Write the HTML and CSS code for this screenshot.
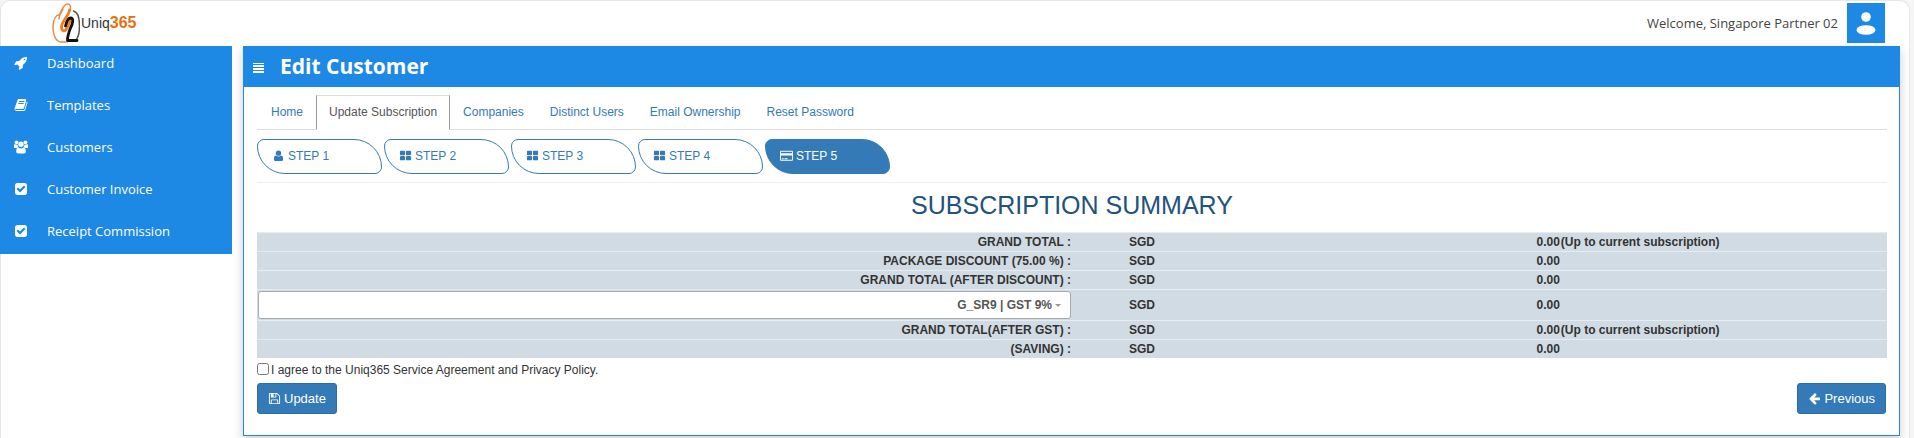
FILE: index.html
```html
<!DOCTYPE html>
<html lang="en">
<head>
<meta charset="utf-8">
<title>Edit Customer</title>
<link rel="stylesheet" href="styles.css">
</head>
<body>
<svg class="sprite" aria-hidden="true">
  <symbol id="check-square" viewBox="0 0 1792 1792"><path d="M813 1299l614-614q19-19 19-45t-19-45l-102-102q-19-19-45-19t-45 19l-467 467-211-211q-19-19-45-19t-45 19l-102 102q-19 19-19 45t19 45l358 358q19 19 45 19t45-19zm851-883v960q0 119-84.500 203.500t-203.500 84.500h-960q-119 0-203.500-84.500t-84.500-203.500v-960q0-119 84.500-203.500t203.500-84.500h960q119 0 203.500 84.500t84.500 203.500z"/></symbol>
  <symbol id="th-large" viewBox="0 0 14 14"><rect x="1" y="2" width="5.500" height="4.700" rx="1"/><rect x="7.500" y="2" width="5.500" height="4.700" rx="1"/><rect x="1" y="7.500" width="5.500" height="4.700" rx="1"/><rect x="7.500" y="7.500" width="5.500" height="4.700" rx="1"/></symbol>
</svg>
<div class="page">
  <header class="topbar">
    <a class="logo" href="#" aria-label="Uniq365">
      <svg class="logo-mark" viewBox="0 0 28 40" fill="none" stroke-linecap="round" stroke-linejoin="round">
        <path d="M15 39H9C4 38.500 .8 32 1 24 1.300 17 3.500 12 7.500 11.500M7 16C7 10 11.500 2 15 1c3.500-.6 4 3 3 6M7.500 13l3.500-7" stroke="#f08a48" stroke-width="1.500"/>
        <path d="M21.500 8c4 1 6 7 6 15 0 7-2 13-4.500 15" stroke="#555" stroke-width="1.500"/>
        <path d="M17.500 7C17 13 9.500 18 9.500 24c0 5 4 5 5.500 1l4-9" stroke="#f57c1c" stroke-width="2.800"/>
        <path d="M13.500 23c1-4 3-8 5-8 3.500 0 2.500 5 0 10-2 5-3 8-3 12.500h9.500" stroke="#111" stroke-width="2.800"/>
      </svg>
      <span class="logo-text">Uniq<b>365</b></span>
    </a>
    <div class="account">
      <span>Welcome, Singapore Partner 02</span>
      <button class="avatar" type="button" aria-label="Account"><svg viewBox="0 0 38 40"><circle cx="19" cy="14" r="4.800"/><ellipse cx="19" cy="27" rx="9.500" ry="4.800"/></svg></button>
    </div>
  </header>
  <div class="layout">
    <nav class="sidebar">
      <a href="#"><svg viewBox="0 0 1792 1792"><path d="M1440 448q0-40-28-68t-68-28-68 28-28 68 28 68 68 28 68-28 28-68zm224-288q0 249-75.500 430.500t-253.500 360.500q-81 80-195 176l-20 379q-2 16-16 26l-384 224q-7 4-16 4-12 0-23-9l-64-64q-13-14-8-32l85-276-281-281-276 85q-3 1-9 1-14 0-23-9l-64-64q-17-19-5-39l224-384q10-14 26-16l379-20q96-114 176-195 188-187 358-258t431-71q14 0 24 9.500t10 22.500z"/></svg>Dashboard</a>
      <a href="#"><svg viewBox="0 0 1792 1792"><path d="M1703 478q40 57 18 129l-275 906q-19 64-76.500 107.500t-122.500 43.500h-923q-77 0-148.500-53.500t-99.500-131.500q-24-67-2-127 0-4 3-27t4-37q1-8-3-21.500t-3-19.500q2-11 8-21t16.500-23.500 16.500-23.500q23-38 45-91.500t30-91.500q3-10 .5-30t-.5-28q3-11 17-28t17-23q21-36 42-92t25-90q1-9-2.500-32t.5-28q4-13 22-30.500t22-22.500q19-26 42.500-84.500t27.500-96.500q1-8-3-25.500t-2-26.500q2-8 9-18t18-23 17-21q8-12 16.500-30.500t15-35 16-36 19.500-32 26.500-23.500 36-11.500 47.500 5.500l-1 3q38-9 51-9h761q74 0 114 56t18 130l-274 906q-36 119-71.500 153.500t-128.500 34.500h-869q-27 0-38 15-11 16-1 43 24 70 144 70h923q29 0 56-15.500t35-41.500l300-987q7-22 5-57 38 15 59 43zm-1064 2q-4 13 2 22.500t20 9.500h608q13 0 25.500-9.500t16.500-22.500l21-64q4-13-2-22.500t-20-9.500h-608q-13 0-25.500 9.500t-16.500 22.500zm-83 256q-4 13 2 22.500t20 9.500h608q13 0 25.500-9.500t16.500-22.500l21-64q4-13-2-22.500t-20-9.500h-608q-13 0-25.500 9.500t-16.500 22.500z"/></svg>Templates</a>
      <a href="#"><svg viewBox="0 0 14 14"><circle cx="2.500" cy="2.300" r="1.900"/><circle cx="11.500" cy="2.300" r="1.900"/><circle cx="7" cy="4.300" r="2.700"/><path d="M0 7.400V6c0-1 .3-1.900 1-1.900.7.500 1.700.7 2.500.4 0 1.200.3 2 .9 2.700-.8 0-1.400.3-1.900.9H1C.4 8.100 0 7.900 0 7.400zM14 7.400V6c0-1-.3-1.900-1-1.900-.7.500-1.700.7-2.500.4 0 1.200-.3 2-.9 2.700.8 0 1.400.3 1.900.9H13c.6 0 1-.2 1-.7zM2.200 11.500c0-2 .5-3.900 2.200-3.900 1.500 1.200 3.700 1.200 5.200 0 1.700 0 2.200 1.900 2.200 3.900 0 1.200-.8 2-1.900 2H4.100c-1.100 0-1.900-.8-1.900-2z"/></svg>Customers</a>
      <a href="#"><svg><use href="#check-square"/></svg>Customer Invoice</a>
      <a href="#"><svg><use href="#check-square"/></svg>Receipt Commission</a>
    </nav>
    <main class="panel">
      <div class="panel-head">
        <button class="menu" type="button" aria-label="Toggle menu"><svg viewBox="0 0 11 11"><path d="M0 1h11v1H0zM0 3h11v2H0zM0 6h11v2H0zM0 9h11v2H0z"/></svg></button>
        <h1>Edit Customer</h1>
      </div>
      <div class="panel-body">
        <nav class="tabs">
          <a href="#">Home</a>
          <a class="active" href="#">Update Subscription</a>
          <a href="#">Companies</a>
          <a href="#">Distinct Users</a>
          <a href="#">Email Ownership</a>
          <a href="#">Reset Password</a>
        </nav>
        <div class="steps">
          <a href="#"><svg viewBox="0 0 14 14"><circle cx="7" cy="4.500" r="2.900"/><path d="M2 11c0-2.200.6-4 2.500-4C6 8.400 8 8.400 9.500 7c1.900 0 2.500 1.800 2.500 4 0 1.200-.8 2-1.800 2H3.800C2.800 13 2 12.200 2 11z"/></svg>STEP 1</a>
          <a href="#"><svg><use href="#th-large"/></svg>STEP 2</a>
          <a href="#"><svg><use href="#th-large"/></svg>STEP 3</a>
          <a href="#"><svg><use href="#th-large"/></svg>STEP 4</a>
          <a class="active" href="#"><svg viewBox="0 0 14 14"><path fill-rule="evenodd" d="M1.300 2h11.400c.7 0 1.300.5 1.300 1.200v8.300c0 .7-.6 1.200-1.300 1.200H1.300C.6 12.700 0 12.200 0 11.500V3.200C0 2.500.6 2 1.300 2zM1 3v1.700h12V3zM1 7v4.700h12V7zM2 10h2v1H2zM5 10h3v1H5z"/></svg>STEP 5</a>
        </div>
        <h2>SUBSCRIPTION SUMMARY</h2>
        <table class="summary">
          <tbody>
            <tr><th scope="row">GRAND TOTAL :</th><td>SGD</td><td>0.00<span class="note">(Up to current subscription)</span></td></tr>
            <tr><th scope="row">PACKAGE DISCOUNT (75.00 %) :</th><td>SGD</td><td>0.00</td></tr>
            <tr><th scope="row">GRAND TOTAL (AFTER DISCOUNT) :</th><td>SGD</td><td>0.00</td></tr>
            <tr><th class="tax" scope="row"><div class="select"><select aria-label="Tax rate"><option>G_SR9 | GST 9%</option></select><svg viewBox="0 0 6 3"><path d="M0 0h6L3 3z"/></svg></div></th><td>SGD</td><td>0.00</td></tr>
            <tr><th scope="row">GRAND TOTAL(AFTER GST) :</th><td>SGD</td><td>0.00<span class="note">(Up to current subscription)</span></td></tr>
            <tr><th scope="row">(SAVING) :</th><td>SGD</td><td>0.00</td></tr>
          </tbody>
        </table>
        <label class="agree"><input type="checkbox">I agree to the Uniq365 Service Agreement and Privacy Policy.</label>
        <div class="actions">
          <button class="btn" type="button"><svg viewBox="0 0 1792 1792"><path d="M512 1536h768v-384h-768v384zm896 0h128v-896q0-14-10-38.500t-20-34.500l-281-281q-10-10-34-20t-39-10v416q0 40-28 68t-68 28h-576q-40 0-68-28t-28-68v-416h-128v1280h128v-416q0-40 28-68t68-28h832q40 0 68 28t28 68v416zm-384-928v-320q0-13-9.500-22.500t-22.500-9.500h-192q-13 0-22.500 9.500t-9.500 22.500v320q0 13 9.500 22.500t22.500 9.500h192q13 0 22.500-9.500t9.500-22.500zm640 32v928q0 40-28 68t-68 28h-1344q-40 0-68-28t-28-68v-1344q0-40 28-68t68-28h928q40 0 88 20t76 48l280 280q28 28 48 76t20 88z"/></svg>Update</button>
          <button class="btn" type="button"><svg viewBox="0 0 1792 1792"><path d="M1664 896v128q0 53-32.500 90.500t-84.500 37.500h-704l293 294q38 36 38 90t-38 90l-75 76q-37 37-90 37-52 0-91-37l-651-652q-37-37-37-90 0-52 37-91l651-650q38-38 91-38 52 0 90 38l75 74q38 38 38 91t-38 91l-293 293h704q52 0 84.500 37.500t32.500 90.500z"/></svg>Previous</button>
        </div>
      </div>
    </main>
  </div>
</div>
</body>
</html>
```
FILE: styles.css
```css
* { box-sizing: border-box; }
body {
  margin: 0;
  background: #f5f5f5;
  color: #333;
  font: 12px/16px "Liberation Sans", Arial, sans-serif;
}
a { text-decoration: none; }
svg { display: block; flex: none; fill: currentColor; }
.sprite { position: absolute; width: 0; height: 0; }
.page {
  min-height: 100vh;
  margin-right: 4px;
  border: 1px solid #e6e6e6;
  border-bottom: 0;
  border-radius: 10px 10px 0 0;
  background: #fff;
}
.topbar {
  display: flex;
  justify-content: space-between;
  align-items: center;
  height: 45px;
  padding: 0 24px 2px 51px;
}
.logo { display: flex; align-items: center; gap: 1px; color: #333; }
.logo-mark { width: 28px; height: 40px; fill: none; }
.logo-text { font: 14px/24px "Liberation Sans", sans-serif; }
.logo-text b { color: #e8700c; font-size: 16px; }
.account {
  display: flex;
  align-items: center;
  gap: 9px;
  color: #444;
  font: 13px/20px "Open Sans", sans-serif;
}
.avatar { width: 38px; height: 40px; padding: 0; border: 0; background: #1e88e5; color: #fff; }
.layout { display: flex; align-items: flex-start; gap: 11px; margin-left: -1px; padding-right: 9px; }
.sidebar {
  display: flex;
  flex-direction: column;
  gap: 8px;
  width: 232px;
  padding-bottom: 6px;
  background: #1e88e5;
  font: 13px/34px "Open Sans", sans-serif;
}
.sidebar a { display: flex; align-items: center; gap: 19px; padding-left: 14px; color: #fff; }
.sidebar svg { width: 14px; height: 14px; }
.panel {
  flex: 1;
  min-width: 0;
  border: 1px solid #1e88e5;
  background: #fff;
  box-shadow: 0 4px 10px rgba(0, 0, 0, .2);
}
.panel-head {
  display: flex;
  align-items: center;
  gap: 16px;
  height: 40px;
  padding-left: 9px;
  background: #1e88e5;
  color: #fff;
}
.menu { padding: 0; border: 0; background: none; color: inherit; }
.menu svg { width: 11px; height: 11px; }
h1 { margin: 0 0 2px; font: bold 21px/38px "Open Sans", sans-serif; }
.panel-body { padding: 8px 12px 21px 13px; }
.tabs { display: flex; padding-left: 1px; border-bottom: 1px solid #ddd; }
.tabs a {
  margin-bottom: -1px;
  padding: 8px 12px;
  border: 1px solid transparent;
  color: #337ab7;
  line-height: 17px;
}
.tabs .active { border-color: #ddd #999 #fff; background: #fff; color: #555; }
.steps { display: flex; gap: 2px; padding: 9px 0 8px; border-bottom: 1px solid #eee; }
.steps a {
  display: flex;
  align-items: center;
  gap: 3px;
  width: 125px;
  height: 35px;
  padding: 0 14px 2px;
  border: 1px solid #337ab7;
  border-radius: 7px 28px;
  color: #337ab7;
}
.steps svg { width: 13px; height: 13px; }
.steps .active { background: #337ab7; color: #fff; }
h2 {
  margin: 8px 0 12px;
  color: #23527c;
  font-size: 25px;
  font-weight: normal;
  line-height: 29px;
  text-align: center;
}
.summary {
  width: 100%;
  border-collapse: collapse;
  table-layout: fixed;
  background: #d1dbe3;
  font-weight: bold;
}
.summary tr { border-top: 1px solid #e6ecf1; }
.summary th { width: 50%; padding: 1px; text-align: right; }
.summary td { padding: 1px 0 1px 57px; }
.note { padding-left: 1px; }
.select { position: relative; }
.select select {
  display: block;
  width: 100%;
  height: 28px;
  padding: 0 18px 0 8px;
  appearance: none;
  border: 1px solid #aaa;
  border-radius: 3px;
  background: #fff;
  color: #555;
  font: bold 12px/16px "Liberation Sans", Arial, sans-serif;
  text-align-last: right;
}
.select svg { position: absolute; top: 13px; right: 10px; width: 6px; height: 3px; color: #999; }
.agree { display: flex; align-items: center; gap: 2px; height: 23px; }
.agree input { width: 12px; height: 12px; margin: 0 0 2px; }
.actions { display: flex; justify-content: space-between; padding: 2px 1px 0 0; }
.btn {
  display: flex;
  align-items: center;
  gap: 3px;
  height: 31px;
  padding: 0 10px;
  border: 1px solid #2e6da4;
  border-radius: 3px;
  background: #337ab7;
  color: #fff;
  font: 13px/18px "Liberation Sans", Arial, sans-serif;
}
.btn svg { width: 13px; height: 13px; }
```
